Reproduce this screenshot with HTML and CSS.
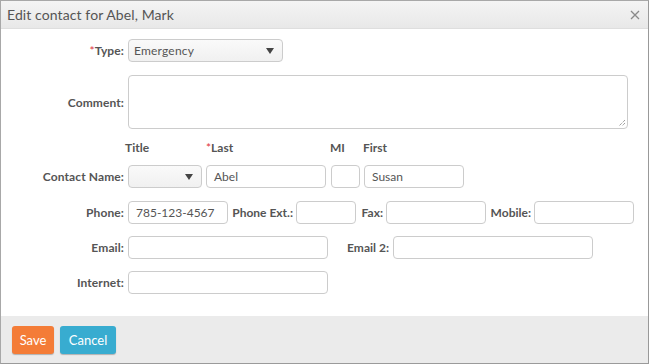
FILE: index.html
```html
<!DOCTYPE html>
<html>
<head>
<meta charset="utf-8">
<link rel="stylesheet" href="styles.css">
</head>
<body>
<div class="dialog">
  <div class="header">
    <span class="title">Edit contact for Abel, Mark</span>
    <svg class="close" width="10" height="10" viewBox="0 0 10 10"><path d="M1 1L9 9M9 1L1 9" stroke="#8a8a8a" stroke-width="1.3"/></svg>
  </div>
  <div class="body">
    <div class="row r-type">
      <label class="lbl"><span class="req">*</span>Type:</label>
      <div class="select sel-type"><span>Emergency</span><svg class="arrow" width="8" height="6" viewBox="0 0 8 6"><path d="M0 0H8L4 6Z" fill="#444"/></svg></div>
    </div>
    <div class="row r-comment">
      <label class="lbl">Comment:</label>
      <div class="textarea"><svg class="grip" width="8" height="8" viewBox="0 0 8 8"><path d="M7 1L1 7M7 4L4 7" stroke="#777" stroke-width="1" stroke-dasharray="1 1"/></svg></div>
    </div>
    <div class="row r-heads">
      <div class="lbl"></div>
      <div class="h h-title">Title</div>
      <div class="h h-last"><span class="req">*</span>Last</div>
      <div class="h h-mi">MI</div>
      <div class="h h-first">First</div>
    </div>
    <div class="row r-name">
      <label class="lbl">Contact Name:</label>
      <div class="select sel-title"><span></span><svg class="arrow" width="8" height="6" viewBox="0 0 8 6"><path d="M0 0H8L4 6Z" fill="#444"/></svg></div>
      <div class="input w-last">Abel</div>
      <div class="input w-mi"></div>
      <div class="input w-first">Susan</div>
    </div>
    <div class="row r-phone">
      <label class="lbl">Phone:</label>
      <div class="input w100">785-123-4567</div>
      <label class="lbl2 l-ext">Phone Ext.:</label>
      <div class="input w60"></div>
      <label class="lbl2 l-fax">Fax:</label>
      <div class="input w100"></div>
      <label class="lbl2 l-mob">Mobile:</label>
      <div class="input w100"></div>
    </div>
    <div class="row r-email">
      <label class="lbl">Email:</label>
      <div class="input w200"></div>
      <label class="lbl2 l-email2">Email 2:</label>
      <div class="input w200"></div>
    </div>
    <div class="row r-internet">
      <label class="lbl">Internet:</label>
      <div class="input w200"></div>
    </div>
  </div>
  <div class="footer">
    <button class="btn save">Save</button>
    <button class="btn cancel">Cancel</button>
  </div>
</div>
</body>
</html>
```

FILE: styles.css
```css
* { box-sizing: border-box; }
html, body { margin: 0; padding: 0; }
body {
  width: 649px;
  height: 364px;
  font-family: Lato, "Open Sans", sans-serif;
  color: #555;
  background: #fff;
}
.dialog {
  width: 649px;
  height: 364px;
  border: 1px solid #a8a8a8;
  border-bottom-color: #9a9a9a;
  border-right-color: #999;
  display: flex;
  flex-direction: column;
}
.header {
  height: 28px;
  flex: none;
  background: linear-gradient(#f4f4f4, #e8e8e8);
  border-bottom: 1px solid #dedede;
  display: flex;
  align-items: center;
  justify-content: space-between;
  padding: 0 8px 0 6px;
}
.title {
  font-size: 14px;
  color: #555;
  letter-spacing: 0.1px;
}
.close { flex: none; margin-top: 1px; }
.body {
  flex: 1;
  padding-top: 10px;
}
.row {
  display: flex;
  align-items: center;
}
.lbl {
  width: 123px;
  flex: none;
  text-align: right;
  margin-right: 4px;
  font-size: 12px;
  font-weight: bold;
  color: #555;
  white-space: nowrap;
  letter-spacing: 0.1px;
}
.lbl2 {
  font-size: 12px;
  font-weight: bold;
  color: #555;
  white-space: nowrap;
  text-align: right;
}
.req { color: #e0343b; font-weight: normal; }
.select, .input, .textarea {
  height: 23px;
  border: 1px solid #ccc;
  border-radius: 4px;
  font-size: 12px;
  color: #555;
  display: flex;
  align-items: center;
  flex: none;
}
.select {
  background: linear-gradient(#fafafa, #f0f0f0);
  justify-content: space-between;
  padding: 0 8px 0 5px;
  letter-spacing: 0.2px;
}
.arrow { flex: none; }
.sel-type { width: 155px; }
.sel-title { width: 74px; }
.input { padding-left: 7px; background: #fff; }
.r-comment { margin-top: 13px; }
.textarea {
  width: 500px;
  height: 54px;
  position: relative;
}
.grip { position: absolute; right: 1px; bottom: 1px; }
.r-heads { margin-top: 10px; height: 16px; }
.h { font-size: 12px; font-weight: bold; color: #555; flex: none; }
.h-title { width: 81px; margin-left: -3px; }
.h-last { width: 124px; }
.h-mi { width: 33px; }
.h-first { width: 60px; }
.r-name { margin-top: 10px; }
.w-last { width: 120px; margin-left: 4px; }
.w-mi { width: 29px; margin-left: 5px; }
.w-first { width: 100px; margin-left: 4px; }
.r-phone { margin-top: 13px; height: 23px; }
.w100 { width: 100px; }
.w60 { width: 60px; }
.w200 { width: 200px; }
.l-ext { width: 65px; margin-right: 3px; }
.l-fax { width: 27px; margin-right: 3px; }
.l-mob { width: 45px; margin-right: 3px; }
.r-email { margin-top: 12px; }
.l-email2 { width: 61px; margin-right: 4px; }
.r-internet { margin-top: 12px; }
.footer {
  height: 47px;
  flex: none;
  background: #ebebeb;
  display: flex;
  align-items: center;
  padding: 0 0 0 11px;
  gap: 6px;
}
.btn {
  height: 28px;
  border: none;
  border-radius: 3px;
  color: #fff;
  font-family: Lato, "Open Sans", sans-serif;
  font-size: 13px;
  padding: 0 7px;
  box-shadow: 0 1px 1px rgba(0,0,0,0.25);
}
.save { background: #f47c37; width: 42px; }
.cancel { background: #38acd0; width: 56px; }
```
